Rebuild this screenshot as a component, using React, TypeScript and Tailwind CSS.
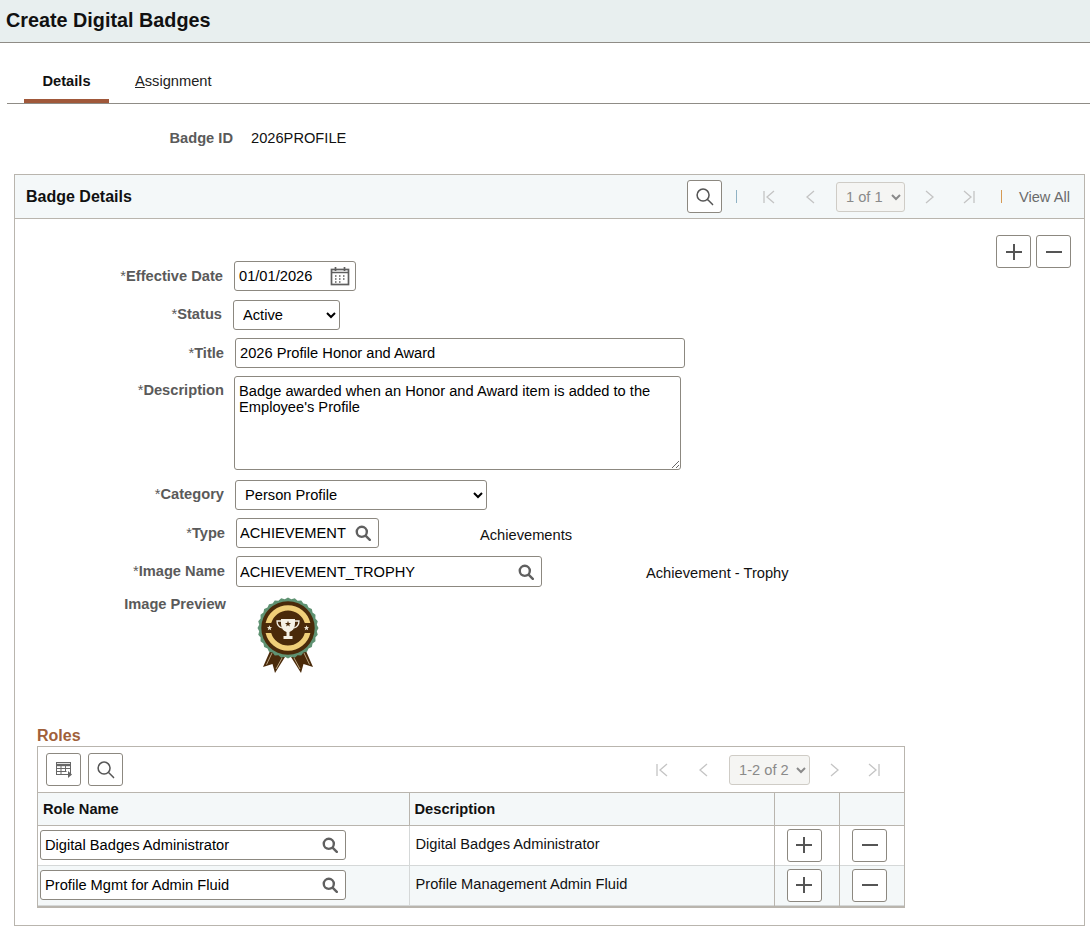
import React from "react";

const border = "border-[#b9b5ae]";

function SearchIcon({ size = 20, bold = false, color = "#555" }: { size?: number; bold?: boolean; color?: string }) {
  return (
    <svg width={size} height={size} viewBox="0 0 20 20" fill="none" stroke={color} strokeWidth={bold ? 3 : 1.6} strokeLinecap="round">
      <circle cx="8.500" cy="8.500" r="6.300" />
      <path d="M13.500 13.500l5 5" />
    </svg>
  );
}

function IconButton({ children, className = "" }: { children: React.ReactNode; className?: string }) {
  return (
    <button className={`flex h-[33px] w-[35px] items-center justify-center rounded-[3px] border border-[#8c8880] bg-white ${className}`}>
      {children}
    </button>
  );
}

const Plus = () => (
  <svg width="18" height="18" viewBox="0 0 18 18" stroke="#555" strokeWidth="2">
    <path d="M1 9h16M9 1v16" />
  </svg>
);
const Minus = () => (
  <svg width="18" height="18" viewBox="0 0 18 18" stroke="#555" strokeWidth="2">
    <path d="M1 9h16" />
  </svg>
);

function Pager({ label, selectClass }: { label: string; selectClass: string }) {
  const s = { width: 16, height: 16, viewBox: "0 0 16 16", fill: "none", stroke: "#c4c4c4", strokeWidth: 1.3 };
  return (
    <div className="flex items-center">
      <svg {...s}><path d="M3 2v12M13 2L6 8l7 6" /></svg>
      <svg {...s} className="ml-[26px]"><path d="M11 2L4 8l7 6" /></svg>
      <select disabled className={`ml-[17px] h-[30px] rounded-[3px] border border-[#cfccc6] bg-[#f5f5f3] pl-[5px] text-[14.670px] text-[#8a8a8a] ${selectClass}`}>
        <option>{label}</option>
      </select>
      <svg {...s} className="ml-[16px]"><path d="M5 2l7 6-7 6" /></svg>
      <svg {...s} className="ml-[24px]"><path d="M3 2l7 6-7 6M13 2v12" /></svg>
    </div>
  );
}

function Label({ text, className }: { text: string; className: string }) {
  return (
    <div className={`shrink-0 text-right text-[14.670px] font-bold leading-[16px] text-[#5a5a5a] ${className}`}>
      {text.startsWith("*") ? (
        <>
          <span className="font-normal">*</span>
          {text.slice(1)}
        </>
      ) : (
        text
      )}
    </div>
  );
}

const inputBase = "h-[30px] rounded-[3px] border border-[#8c8880] bg-white text-[14.670px] text-black outline-none";

function Lookup({ value, className }: { value: string; className: string }) {
  return (
    <div className={`flex items-center justify-between rounded-[3px] border border-[#8c8880] bg-white ${className}`}>
      <input readOnly value={value} className="min-w-0 flex-1 bg-transparent text-[14.670px] text-black outline-none" />
      <span className="shrink-0">
        <SearchIcon size={16} bold color="#606060" />
      </span>
    </div>
  );
}

function star(cx: number, cy: number, R: number, r: number) {
  const p: string[] = [];
  for (let i = 0; i < 10; i++) {
    const a = -Math.PI / 2 + (i * Math.PI) / 5;
    const rad = i % 2 ? r : R;
    p.push(`${cx + rad * Math.cos(a)},${cy + rad * Math.sin(a)}`);
  }
  return p.join(" ");
}

function BadgeArt() {
  const n = 28;
  const pts: string[] = [];
  for (let i = 0; i < n * 2; i++) {
    const a = (i / (n * 2)) * Math.PI * 2;
    const r = i % 2 ? 29 : 30.500;
    pts.push(`${31 + r * Math.cos(a)},${31 + r * Math.sin(a)}`);
  }
  return (
    <svg width="62" height="77" viewBox="0 0 62 77">
      <polygon points="6,70 13,54 28,60 18,76 15.500,67" fill="#4a2a0a" />
      <polygon points="56,70 49,54 34,60 44,76 46.500,67" fill="#4a2a0a" />
      <path d="M9.500 67.500L15 56M52.500 67.500L47 56M19 72l6-11M43 72l-6-11" stroke="#e9d9b5" strokeWidth="0.7" />
      <polygon points={pts.join(" ")} fill="#5f9272" />
      <circle cx="31" cy="31" r="26.700" fill="#4a2a0a" />
      <path d="M8.600 26A23 23 0 0 1 53.400 26L47.800 26A17.500 17.500 0 0 0 14.200 26Z" fill="#f0cf78" />
      <path d="M8.600 36A23 23 0 0 0 53.400 36L47.800 36A17.500 17.500 0 0 1 14.200 36Z" fill="#f0cf78" />
      <path d="M24 22h14v4c0 6-3 8-5.500 9v4h3v3h-9v-3h3v-4C27 34 24 32 24 26z" fill="#f5f1e6" />
      <path d="M24 24h-4c0 4 2 6 5 7M38 24h4c0 4-2 6-5 7" stroke="#f5f1e6" strokeWidth="1.300" fill="none" />
      <polygon points={star(31, 27, 3.200, 1.300)} fill="#4a2a0a" />
      <polygon points={star(12.500, 31, 2.800, 1.200)} fill="#efe9d8" />
      <polygon points={star(49.500, 31, 2.800, 1.200)} fill="#efe9d8" />
    </svg>
  );
}

const roles = [
  { name: "Digital Badges Administrator", desc: "Digital Badges Administrator", bg: "bg-white" },
  { name: "Profile Mgmt for Admin Fluid", desc: "Profile Management Admin Fluid", bg: "bg-[#f4f8f9]" },
];

export default function App() {
  return (
    <div className="h-[931px] w-[1090px] overflow-hidden bg-white font-['Liberation_Sans',Arial,sans-serif] text-black">
      <header className="flex h-[43px] items-start border-b border-[#8f8c86] bg-[#e8efef] pl-[6px] pt-[9px]">
        <h1 className="text-[19.800px] font-bold leading-[22px] text-[#111]">Create Digital Badges</h1>
      </header>

      <nav className="ml-[7px] flex h-[61px] items-end border-b border-[#8f8c86] pl-[17px]">
        <div className="flex h-[34px] w-[85px] justify-center border-b-[4px] border-[#a0583a] pt-[4px] text-[14.670px] font-bold leading-[16px] text-[#111]">
          Details
        </div>
        <div className="ml-[26px] h-[34px] pt-[4px] text-[14.670px] leading-[16px] text-[#222]">
          <span className="underline">A</span>ssignment
        </div>
      </nav>

      <div className="flex h-[70px] items-start pt-[26px]">
        <Label text="Badge ID" className="w-[233px]" />
        <span className="ml-[18px] text-[14.670px] leading-[16px] text-[#111]">2026PROFILE</span>
      </div>

      <section className={`ml-[14px] h-[752px] w-[1071px] border ${border}`}>
        <div className={`flex h-[44px] items-center justify-between border-b ${border} bg-[#f4f8f9] pl-[11px] pr-[14px]`}>
          <h2 className="text-[16px] font-bold leading-[20px] text-[#111]">Badge Details</h2>
          <div className="flex items-center">
            <IconButton><SearchIcon size={19} /></IconButton>
            <span className="ml-[14px] mr-[24px] h-[13px] w-px bg-[#8fb2c4]" />
            <Pager label="1 of 1" selectClass="w-[69px]" />
            <span className="ml-[24px] h-[13px] w-px bg-[#d69a54]" />
            <a className="ml-[17px] text-[14.670px] text-[#6b6b6b]">View All</a>
          </div>
        </div>

        <div className="flex justify-end gap-[5px] pr-[13px] pt-[16px]">
          <IconButton><Plus /></IconButton>
          <IconButton><Minus /></IconButton>
        </div>

        <div className="mt-[-7px] flex flex-col">
          <div className="flex h-[30px] items-center">
            <Label text="*Effective Date" className="w-[208px]" />
            <div className={`ml-[11px] flex w-[122px] items-center justify-between pl-[4px] pr-[5px] ${inputBase}`}>
              <span>01/01/2026</span>
              <svg width="20" height="20" viewBox="0 0 20 20" fill="none" stroke="#5f5f5f" strokeWidth="1.700">
                <rect x="1.500" y="3.500" width="17" height="15" />
                <path d="M1.500 6.500h17M5.500 1v4M14.500 1v4" />
                <path d="M5 10h2M9 10h2M13 10h2M5 13h2M9 13h2M13 13h2M5 16h2M9 16h2" strokeDasharray="1.500 .5" strokeWidth="1.400" />
              </svg>
            </div>
          </div>

          <div className="mt-[9px] flex h-[30px] items-center">
            <Label text="*Status" className="mt-[-2px] w-[207px]" />
            <select className={`ml-[11px] w-[107px] pl-[5px] ${inputBase}`}>
              <option>Active</option>
            </select>
          </div>

          <div className="mt-[8px] flex h-[30px] items-center">
            <Label text="*Title" className="w-[209px]" />
            <input readOnly value="2026 Profile Honor and Award" className={`ml-[11px] w-[450px] pl-[4px] ${inputBase}`} />
          </div>

          <div className="mt-[8px] flex h-[94px] items-start">
            <Label text="*Description" className="mt-[6px] w-[209px]" />
            <textarea
              readOnly
              value={"Badge awarded when an Honor and Award item is added to the Employee's Profile"}
              className="ml-[10px] h-[94px] w-[447px] rounded-[3px] border border-[#8c8880] bg-white pl-[4px] pt-[6px] text-[14.670px] leading-[16px] text-black outline-none"
            />
          </div>

          <div className="mt-[10px] flex h-[30px] items-center">
            <Label text="*Category" className="mt-[-2px] w-[209px]" />
            <select className={`ml-[11px] w-[252px] pl-[5px] ${inputBase}`}>
              <option>Person Profile</option>
            </select>
          </div>

          <div className="mt-[8px] flex h-[30px] items-center">
            <Label text="*Type" className="w-[210px]" />
            <Lookup value="ACHIEVEMENT" className="ml-[11px] h-[30px] w-[143px] pl-[3px] pr-[7px]" />
            <span className="ml-[101px] mt-[3px] text-[14.670px] text-[#111]">Achievements</span>
          </div>

          <div className="mt-[8px] flex h-[31px] items-center">
            <Label text="*Image Name" className="mt-[-2px] w-[210px]" />
            <Lookup value="ACHIEVEMENT_TROPHY" className="ml-[11px] h-[31px] w-[306px] pl-[3px] pr-[7px]" />
            <span className="ml-[104px] mt-[3px] text-[14.670px] text-[#111]">Achievement - Trophy</span>
          </div>

          <div className="mt-[10px] flex items-start">
            <Label text="Image Preview" className="mt-[-1px] w-[211px]" />
            <div className="ml-[31px]"><BadgeArt /></div>
          </div>
        </div>

        <div className="ml-[22px] mt-[53px]">
          <h3 className="text-[16px] font-bold leading-[18px] text-[#a0603a]">Roles</h3>
          <div className={`mt-[1px] w-[868px] border ${border} border-b-2`}>
            <div className={`flex h-[46px] items-center justify-between border-b ${border} pl-[8px] pr-[22px]`}>
              <div className="flex gap-[7px]">
                <IconButton>
                  <svg width="18" height="18" viewBox="0 0 18 18" fill="none" stroke="#666" strokeWidth="1">
                    <rect x="1.500" y="1.500" width="14" height="12" />
                    <path d="M1.500 4h14" strokeWidth="2.400" />
                    <path d="M1.500 7.500h14M1.500 10.500h10M6 4v9.500M10.500 4v6" />
                    <path d="M13 10l4 3.500-4 3.500z" fill="#666" stroke="none" />
                  </svg>
                </IconButton>
                <IconButton><SearchIcon size={19} /></IconButton>
              </div>
              <Pager label="1-2 of 2" selectClass="w-[81px]" />
            </div>
            <table className="w-full table-fixed border-collapse text-[14.670px]">
              <colgroup>
                <col className="w-[371px]" />
                <col className="w-[365px]" />
                <col className="w-[65px]" />
                <col />
              </colgroup>
              <thead>
                <tr className={`h-[32px] border-b ${border} bg-[#f4f8f9]`}>
                  <th className={`border-r ${border} pl-[5px] text-left font-bold text-[#111]`}>Role Name</th>
                  <th className={`border-r ${border} pl-[5px] text-left font-bold text-[#111]`}>Description</th>
                  <th className={`border-r ${border}`} />
                  <th />
                </tr>
              </thead>
              <tbody>
                {roles.map((r) => (
                  <tr key={r.name} className={`h-[40px] border-b border-[#d5d8d8] ${r.bg}`}>
                    <td className="border-r border-[#d5d8d8] pl-[2px]">
                      <Lookup value={r.name} className="h-[30px] w-[306px] pl-[4px] pr-[7px]" />
                    </td>
                    <td className={`border-r ${border} pl-[6px] pb-[3px] text-[#111]`}>{r.desc}</td>
                    <td className={`border-r ${border}`}>
                      <div className="flex justify-center pr-[5px]">
                        <IconButton><Plus /></IconButton>
                      </div>
                    </td>
                    <td>
                      <div className="flex justify-center pr-[4px]">
                        <IconButton><Minus /></IconButton>
                      </div>
                    </td>
                  </tr>
                ))}
              </tbody>
            </table>
          </div>
        </div>
      </section>
    </div>
  );
}
